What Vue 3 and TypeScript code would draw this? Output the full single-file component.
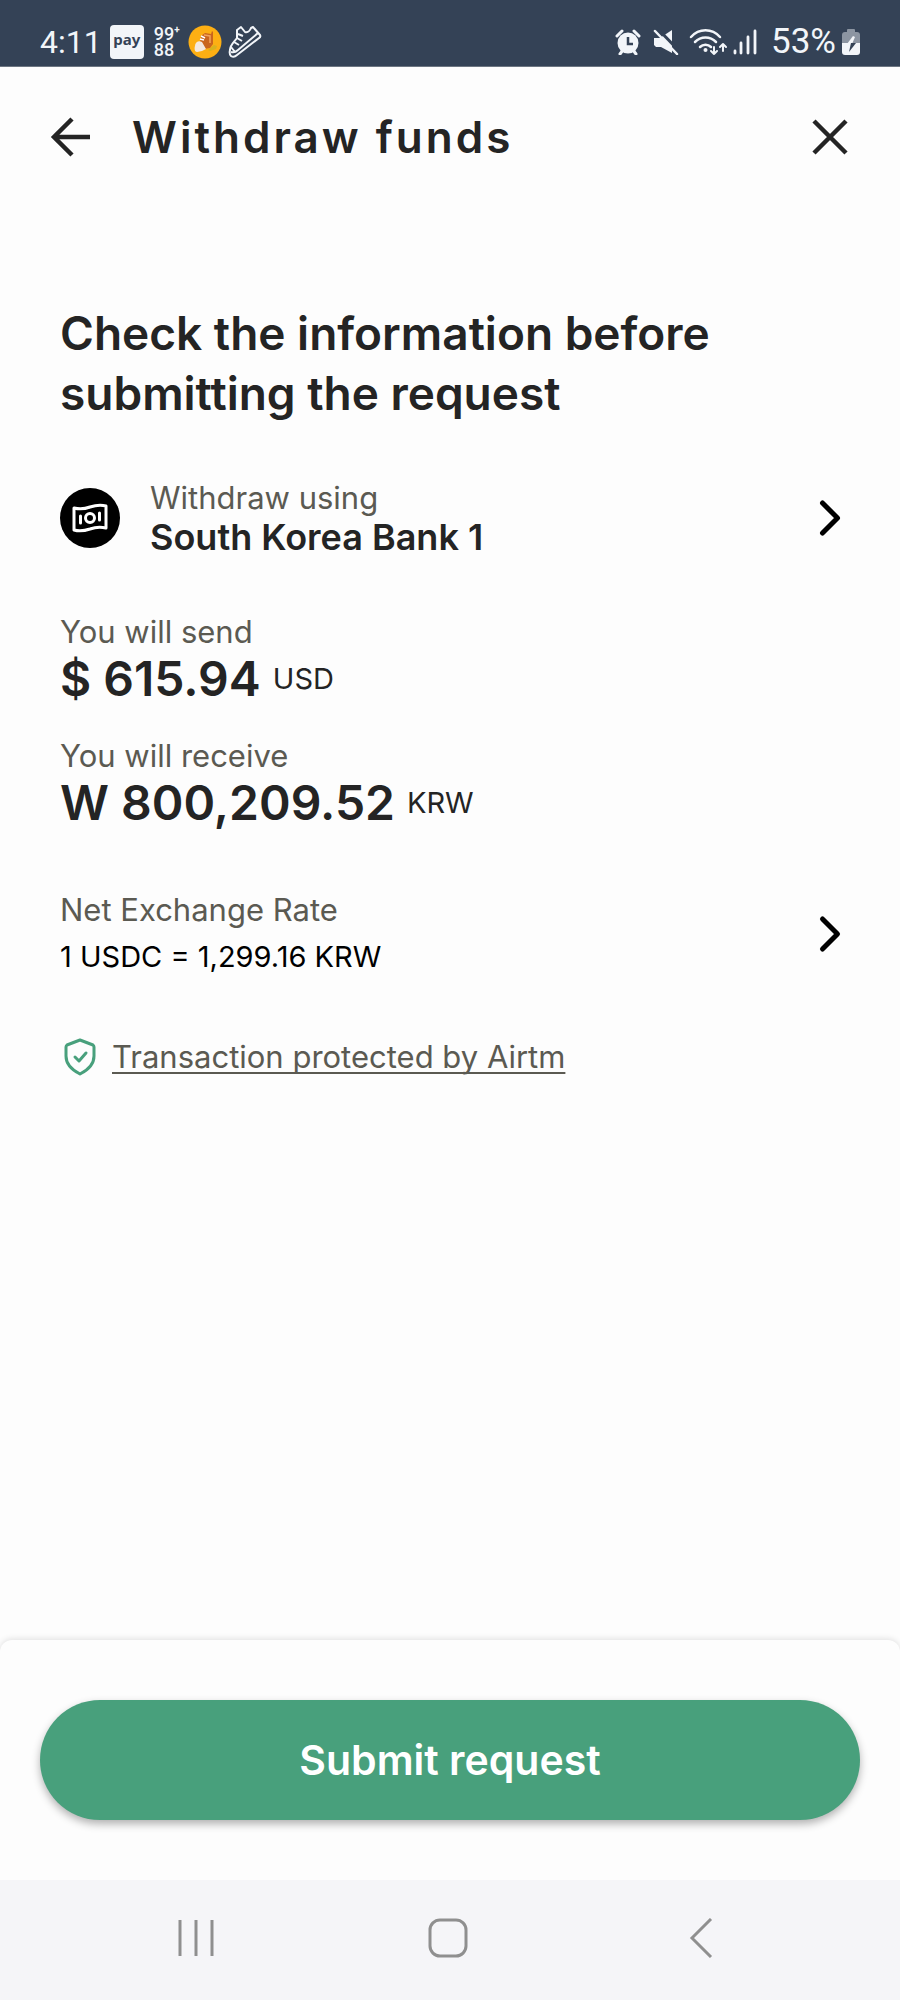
<script setup lang="ts">
interface Amount {
  label: string
  value: string
  currency: string
}

const amounts: Amount[] = [
  { label: 'You will send', value: '$ 615.94', currency: 'USD' },
  { label: 'You will receive', value: 'W 800,209.52', currency: 'KRW' },
]
</script>

<template>
  <div class="screen">
    <div class="status">
      <div class="status-group">
        <span class="clock">4:11</span>
        <span class="pay">pay</span>
        <span class="counter">
          <span class="counter-digits"><span>99</span><span>88</span></span>
          <span class="plus">+</span>
        </span>
        <svg class="coin" viewBox="0 0 34 34" aria-hidden="true">
          <circle cx="17" cy="17" r="16.5" fill="#fdaf13" />
          <path d="M20 25 26 20l3 1-1 3-6 2z" fill="#d8b21f" />
          <path d="M13 11 17 8l6 1 1-3 1 1v12l-3 4-6 1-4-6z" fill="#c9651d" />
          <path d="M16 10 22 11v7" fill="none" stroke="#f2a35c" stroke-width="1.5" />
          <path d="M7 21c0-4 4-6 7-4l4 7-4 2-5 1c-2 0-3-3-2-6z" fill="#f3e8df" />
          <path d="m12 14 4 1m-3-4 4 2" stroke="#fff" stroke-width="1.5" />
        </svg>
        <svg class="shoe" viewBox="0 0 34 34" aria-hidden="true">
          <path d="M9 5 13 2l4 5q4 1 6-4l2-1 7 8q1 2-1 3L9 30q-3 3-6 1-2-2-1-6c0-5 4-8 7-12z" />
          <path d="M3 27q4 1 7-2L30 8M10 9l5 2M9 13l5 3M6 17l5 3M3 22l4 5" />
        </svg>
      </div>
      <div class="status-group">
        <svg class="alarm" viewBox="0 0 26 26" aria-hidden="true">
          <circle cx="13" cy="14" r="10.5" fill="#f2f5f9" />
          <path d="M2 7 7 2m17 5-5-5M5 25l3-4m13 4-3-4" stroke="#f2f5f9" stroke-width="3" stroke-linecap="round" />
          <path d="M13 8v7h5" fill="none" stroke="#344256" stroke-width="2.5" />
        </svg>
        <svg class="mute" viewBox="0 0 26 26" aria-hidden="true">
          <path d="M1 9h6l12-8v23L8 18H3l-2-2z" fill="#f2f5f9" />
          <path d="M5 0 28 24" stroke="#344256" stroke-width="3" />
          <path d="M2 2 24 25" stroke="#f2f5f9" stroke-width="2.5" stroke-linecap="round" />
        </svg>
        <svg class="wifi" viewBox="0 0 38 28" aria-hidden="true">
          <g fill="none" stroke="#f2f5f9" stroke-width="2.5" stroke-linecap="round" stroke-linejoin="round">
            <path d="M2 9c8-9 21-9 29 0M6 14c6-6 15-6 21 0M11 19c3-3 8-3 11 0" />
            <path d="M25 19v7m-3-3 3 3 3-3M34 23v-7m-3 3 3-3 3 3" stroke-width="2" />
          </g>
          <circle cx="16.5" cy="22" r="2" fill="#f2f5f9" />
        </svg>
        <svg class="signal" viewBox="0 0 24 26" aria-hidden="true">
          <path d="M2 22v2M8 14v10M15 8v16M22 2v22" stroke="#f2f5f9" stroke-width="2.8" stroke-linecap="round" />
        </svg>
        <span class="percent">53%</span>
        <svg class="battery" viewBox="0 0 18 26" aria-hidden="true">
          <path d="M5 3V1q0-1 1-1h6q1 0 1 1v2h2q3 0 3 3v9H0V6q0-3 3-3z" fill="#8c95a2" />
          <path d="M0 14h18v9q0 3-3 3H3q-3 0-3-3z" fill="#f2f5f9" />
          <path d="m11 7-6 8h5l3-7z" fill="#f2f5f9" />
          <path d="M9 14h5l-7 9z" fill="#344256" />
        </svg>
      </div>
    </div>

    <header class="header">
      <button class="icon-button" type="button" aria-label="Back">
        <svg class="icon" viewBox="0 0 40 40"><path d="M22 2 4 20l18 18M4 20h36" fill="none" stroke="#242424" stroke-width="4.5" /></svg>
      </button>
      <h1 class="title">Withdraw funds</h1>
      <button class="icon-button" type="button" aria-label="Close">
        <svg class="icon" viewBox="0 0 40 40"><path d="m4 4 32 32M36 4 4 36" stroke="#242424" stroke-width="4.5" /></svg>
      </button>
    </header>

    <main class="content">
      <h2 class="heading">Check the information before submitting the request</h2>

      <button class="row method" type="button">
        <svg class="bank" viewBox="0 0 60 60" aria-hidden="true">
          <circle cx="30" cy="30" r="30" fill="#000" />
          <g fill="none" stroke="#fff" stroke-width="3" stroke-linecap="round" stroke-linejoin="round">
            <path d="M14 20q8 2 16-1 9-3 16-1v22q-8-2-16 1-9 3-16 1z" />
            <circle cx="30" cy="30" r="4.5" />
            <path d="M20.500 28v7M39.500 25v7" />
          </g>
        </svg>
        <span class="row-text">
          <span class="label">Withdraw using</span>
          <span class="bank-name">South Korea Bank 1</span>
        </span>
        <svg class="icon" viewBox="0 0 40 40" aria-hidden="true"><path d="m12.500 5 15 15-15 15" /></svg>
      </button>

      <dl class="amounts">
        <div v-for="amount in amounts" :key="amount.label">
          <dt class="label">{{ amount.label }}</dt>
          <dd class="amount"><strong>{{ amount.value }}</strong><span>{{ amount.currency }}</span></dd>
        </div>
      </dl>

      <button class="row rate" type="button">
        <span class="row-text">
          <span class="label">Net Exchange Rate</span>
          <span class="rate-value">1 USDC = 1,299.16 KRW</span>
        </span>
        <svg class="icon" viewBox="0 0 40 40" aria-hidden="true"><path d="m12.500 5 15 15-15 15" /></svg>
      </button>

      <a class="protected" href="#">
        <svg class="shield" viewBox="0 0 40 40" aria-hidden="true">
          <path d="M20 3 33 8q1 1 1 2v9c0 9-6 14-14 18C12 33 6 28 6 19v-9q0-1 1-2z" />
          <path d="m15 20 4 4 7-8" />
        </svg>
        <span>Transaction protected by Airtm</span>
      </a>
    </main>

    <footer class="sheet">
      <button class="submit" type="button">Submit request</button>
    </footer>

    <nav class="system" aria-label="System navigation">
      <button class="icon-button" type="button" aria-label="Recent apps">
        <svg class="icon" viewBox="0 0 40 40"><path d="M4 2v36M20 2v36M36 2v36" /></svg>
      </button>
      <button class="icon-button" type="button" aria-label="Home">
        <svg class="icon" viewBox="0 0 40 40"><rect x="2" y="2" width="36" height="36" rx="10" /></svg>
      </button>
      <button class="icon-button" type="button" aria-label="Go back">
        <svg class="icon" viewBox="0 0 40 40"><path d="M31 1 12 20l19 19" /></svg>
      </button>
    </nav>
  </div>
</template>

<style>
body {
  margin: 0;
  background: #fdfdfd;
}
</style>

<style scoped>
.screen {
  display: flex;
  flex-direction: column;
  min-height: 100vh;
  background: #fdfdfd;
  color: #242424;
  font-family: Inter, "Liberation Sans", sans-serif;
}
button {
  padding: 0;
  border: 0;
  background: none;
  color: inherit;
  font: inherit;
  text-align: left;
  cursor: pointer;
}
svg {
  display: block;
  flex: none;
}
.status {
  display: flex;
  justify-content: space-between;
  box-sizing: border-box;
  height: 67px;
  padding: 18px 40px 0;
  border-bottom: 1px solid #6d7682;
  background: #344256;
  color: #f2f5f9;
}
.status-group {
  display: flex;
  align-items: center;
  height: 48px;
}
.clock {
  font: 400 32px/40px Roboto, sans-serif;
}
.percent {
  font: 400 35px/40px Roboto, sans-serif;
}
.pay {
  width: 34px;
  height: 34px;
  margin-left: 8px;
  border-radius: 4px;
  background: #f2f5f9;
  color: #344256;
  font: 700 15px/28px "Noto Sans", sans-serif;
  text-align: center;
}
.counter {
  display: flex;
  align-items: flex-start;
  margin-left: 10px;
}
.counter-digits {
  display: flex;
  flex-direction: column;
  font: 500 18px/16px Roboto, sans-serif;
}
.plus {
  font: 700 10px/8px Roboto, sans-serif;
}
.coin {
  width: 34px;
  height: 34px;
  margin-left: 8px;
}
.shoe {
  width: 34px;
  height: 34px;
  margin-left: 6px;
  fill: none;
  stroke: #f2f5f9;
  stroke-width: 2;
  stroke-linejoin: round;
}
.alarm {
  width: 26px;
  height: 26px;
  margin-right: 12px;
}
.mute {
  width: 26px;
  height: 26px;
  margin-right: 10px;
}
.wifi {
  width: 38px;
  height: 28px;
  margin-right: 6px;
}
.signal {
  width: 24px;
  height: 26px;
  margin-right: 14px;
}
.battery {
  width: 18px;
  height: 26px;
  margin-left: 6px;
}
.header {
  display: flex;
  align-items: center;
  padding: 40px 50px;
}
.icon-button {
  flex: none;
}
.icon {
  width: 40px;
  height: 40px;
}
.title {
  flex: 1;
  margin: 0 0 0 42px;
  font-size: 44px;
  font-weight: 600;
  line-height: 60px;
  letter-spacing: 3px;
}
.content {
  flex: 1;
  padding: 96px 50px 60px 60px;
}
.heading {
  margin: 0;
  font-size: 46px;
  font-weight: 600;
  line-height: 60px;
}
.row {
  display: flex;
  align-items: center;
  width: 100%;
}
.row .icon {
  fill: none;
  stroke: #000;
  stroke-width: 5;
  stroke-linecap: round;
  stroke-linejoin: round;
}
.row-text {
  display: flex;
  flex: 1;
  flex-direction: column;
}
.method {
  margin-top: 56px;
}
.bank {
  width: 60px;
  height: 60px;
  margin-right: 30px;
}
.label {
  color: #5b5a52;
  font-size: 31px;
  line-height: 38px;
}
.bank-name {
  font-size: 36px;
  font-weight: 600;
  line-height: 40px;
}
.amounts {
  display: grid;
  gap: 30px;
  margin: 56px 0 0;
}
.amount {
  display: flex;
  align-items: center;
  gap: 12px;
  margin: 0;
  font-size: 29px;
  line-height: 56px;
}
.amount strong {
  font-size: 48px;
  font-weight: 600;
}
.rate {
  margin-top: 60px;
}
.rate-value {
  margin-top: 8px;
  color: #000;
  font-size: 29px;
  line-height: 40px;
}
.protected {
  display: inline-flex;
  align-items: center;
  gap: 12px;
  margin-top: 60px;
  color: #5b5a52;
  font-size: 31px;
  line-height: 40px;
  text-decoration: none;
}
.protected span {
  text-decoration: underline;
  text-decoration-thickness: 2px;
  text-decoration-skip-ink: none;
  text-underline-offset: 4px;
}
.shield {
  width: 40px;
  height: 40px;
  fill: none;
  stroke: #48a07c;
  stroke-width: 3;
  stroke-linecap: round;
  stroke-linejoin: round;
}
.sheet {
  padding: 60px 40px;
  border-radius: 12px 12px 0 0;
  background: #fdfdfd;
  box-shadow: 0 -1px 6px rgba(0, 0, 0, 0.12);
}
.submit {
  display: block;
  width: 100%;
  height: 120px;
  border-radius: 60px;
  background: #48a07c;
  box-shadow: 0 4px 8px rgba(0, 0, 0, 0.3);
  color: #fff;
  font-size: 41px;
  font-weight: 600;
  text-align: center;
}
.system {
  position: relative;
  display: flex;
  justify-content: space-between;
  padding: 38px 180px 42px 176px;
  background: #f5f5f8;
}
.system .icon {
  fill: none;
  stroke: #8f8f8f;
  stroke-width: 3;
}
</style>
